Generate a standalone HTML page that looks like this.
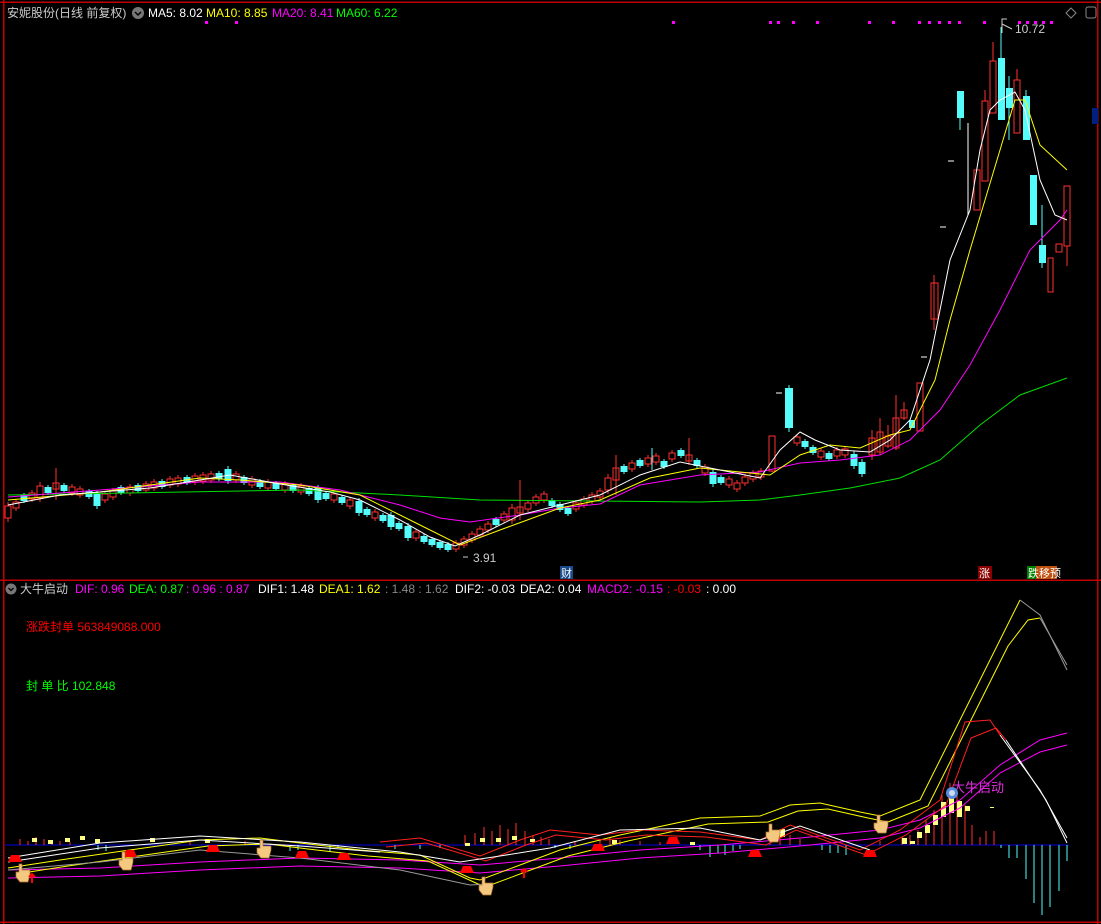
<!DOCTYPE html>
<html><head><meta charset="utf-8"><style>
html,body{margin:0;padding:0;background:#000;width:1101px;height:924px;overflow:hidden}
svg{display:block}
text{font-family:"Liberation Sans","Noto Sans CJK SC",sans-serif}
.c{shape-rendering:crispEdges}
</style></head><body>
<svg width="1101" height="924" viewBox="0 0 1101 924" xmlns="http://www.w3.org/2000/svg" xmlns:xlink="http://www.w3.org/1999/xlink">
<defs>
<g id="u"><line x1="0" y1="-6" x2="0" y2="6" stroke="#ff3030"/><rect x="-3" y="-3" width="6" height="6" fill="#000" stroke="#ff3030"/></g>
<g id="U"><line x1="0" y1="-10" x2="0" y2="10" stroke="#ff3030"/><rect x="-3" y="-6" width="6" height="12" fill="#000" stroke="#ff3030"/></g>
<g id="d"><line x1="0" y1="-5" x2="0" y2="5" stroke="#54fcfc"/><rect x="-3.5" y="-3" width="7" height="6" fill="#54fcfc"/></g>
<g id="D"><line x1="0" y1="-9" x2="0" y2="9" stroke="#54fcfc"/><rect x="-3.5" y="-6" width="7" height="12" fill="#54fcfc"/></g>
</defs>
<rect width="1101" height="924" fill="#000"/>
<g stroke="#c00000" stroke-width="1.5" fill="none" class="c">
<line x1="0" y1="2" x2="1101" y2="2"/>
<line x1="3.5" y1="0" x2="3.5" y2="924"/>
<line x1="1097.5" y1="0" x2="1097.5" y2="924"/>
<line x1="0" y1="580" x2="1101" y2="580"/>
<line x1="0" y1="922" x2="1101" y2="922"/>
</g>
<g class="c">
<use href="#U" x="8" y="512"/><use href="#u" x="16" y="505"/><use href="#d" x="24" y="498"/><use href="#u" x="32" y="496"/><use href="#U" x="40" y="492"/>
<use href="#d" x="48" y="490"/><use href="#u" x="56" y="486"/><use href="#d" x="64" y="488"/><use href="#u" x="72" y="490"/><use href="#u" x="80" y="492"/>
<use href="#d" x="89" y="494"/><use href="#D" x="97" y="500"/><use href="#u" x="105" y="497"/><use href="#u" x="113" y="494"/><use href="#d" x="121" y="490"/>
<use href="#u" x="130" y="490"/><use href="#d" x="138" y="488"/><use href="#u" x="146" y="487"/><use href="#u" x="154" y="485"/><use href="#d" x="162" y="484"/>
<use href="#u" x="170" y="482"/><use href="#u" x="178" y="481"/><use href="#d" x="187" y="480"/><use href="#u" x="195" y="479"/><use href="#u" x="203" y="478"/>
<use href="#u" x="211" y="477"/><use href="#d" x="219" y="476"/><use href="#D" x="228" y="475"/><use href="#u" x="236" y="477"/><use href="#d" x="244" y="480"/>
<use href="#u" x="252" y="482"/><use href="#d" x="260" y="484"/><use href="#u" x="268" y="485"/><use href="#d" x="276" y="486"/><use href="#u" x="285" y="487"/>
<use href="#d" x="293" y="488"/><use href="#u" x="301" y="489"/><use href="#d" x="309" y="491"/><use href="#D" x="318" y="494"/><use href="#d" x="326" y="496"/>
<use href="#u" x="334" y="497"/><use href="#d" x="342" y="500"/><use href="#u" x="350" y="503"/><use href="#D" x="359" y="507"/><use href="#d" x="367" y="512"/>
<use href="#u" x="375" y="515"/><use href="#d" x="383" y="518"/><use href="#D" x="391" y="521"/><use href="#d" x="399" y="526"/><use href="#D" x="408" y="532"/>
<use href="#u" x="416" y="535"/><use href="#d" x="424" y="539"/><use href="#d" x="432" y="542"/><use href="#d" x="440" y="545"/><use href="#d" x="448" y="547"/>
<use href="#u" x="456" y="546"/><use href="#u" x="464" y="542"/><use href="#u" x="472" y="537"/><use href="#u" x="480" y="532"/><use href="#u" x="488" y="527"/>
<use href="#d" x="496" y="522"/><use href="#u" x="504" y="517"/><use href="#U" x="512" y="514"/><use href="#u" x="520" y="510"/><use href="#u" x="528" y="506"/>
<use href="#u" x="536" y="500"/><use href="#u" x="544" y="497"/><use href="#d" x="552" y="503"/><use href="#d" x="560" y="507"/><use href="#d" x="568" y="511"/>
<use href="#u" x="576" y="506"/><use href="#u" x="584" y="502"/><use href="#u" x="592" y="498"/><use href="#u" x="600" y="494"/><use href="#U" x="608" y="484"/>
<use href="#U" x="616" y="474"/><use href="#d" x="624" y="469"/><use href="#u" x="632" y="466"/><use href="#d" x="640" y="463"/><use href="#u" x="648" y="461"/>
<use href="#u" x="656" y="459"/><use href="#d" x="664" y="464"/><use href="#u" x="672" y="456"/><use href="#d" x="681" y="453"/><use href="#u" x="689" y="458"/>
<use href="#d" x="697" y="463"/><use href="#u" x="705" y="470"/><use href="#D" x="713" y="478"/><use href="#d" x="721" y="480"/><use href="#u" x="729" y="482"/>
<use href="#u" x="737" y="486"/><use href="#u" x="745" y="480"/><use href="#u" x="753" y="476"/><use href="#u" x="761" y="474"/>
<line x1="689" y1="438" x2="689" y2="465" stroke="#ff3030"/><line x1="652" y1="448" x2="652" y2="470" stroke="#54fcfc"/><line x1="616" y1="455" x2="616" y2="495" stroke="#ff3030"/>
<line x1="56" y1="468" x2="56" y2="500" stroke="#ff3030"/><line x1="520" y1="480" x2="520" y2="520" stroke="#ff3030"/>
<line x1="772" y1="436" x2="772" y2="472" stroke="#ff3030"/><rect x="769" y="436" width="6" height="35" fill="#000" stroke="#ff3030"/>
<line x1="789" y1="385" x2="789" y2="432" stroke="#54fcfc"/><rect x="785" y="388" width="8" height="40" fill="#54fcfc"/><line x1="776" y1="393" x2="782" y2="393" stroke="#fff"/>
<use href="#u" x="797" y="440"/><use href="#d" x="805" y="444"/><use href="#d" x="813" y="450"/><use href="#u" x="821" y="454"/><use href="#d" x="829" y="456"/>
<use href="#u" x="837" y="453"/><use href="#u" x="845" y="452"/><use href="#D" x="854" y="460"/><use href="#D" x="862" y="468"/>
<rect x="869" y="438" width="6" height="17" fill="#000" stroke="#ff3030"/><line x1="872" y1="430" x2="872" y2="460" stroke="#ff3030"/>
<rect x="877" y="432" width="6" height="20" fill="#000" stroke="#ff3030"/><line x1="880" y1="418" x2="880" y2="455" stroke="#ff3030"/>
<rect x="885" y="436" width="6" height="10" fill="#000" stroke="#ff3030"/><line x1="888" y1="425" x2="888" y2="448" stroke="#ff3030"/>
<rect x="893" y="418" width="6" height="30" fill="#000" stroke="#ff3030"/><line x1="896" y1="395" x2="896" y2="450" stroke="#ff3030"/>
<rect x="901" y="410" width="6" height="8" fill="#000" stroke="#ff3030"/><line x1="904" y1="402" x2="904" y2="420" stroke="#ff3030"/>
<rect x="909" y="420" width="6" height="8" fill="#54fcfc"/>
<rect x="917" y="383" width="6" height="48" fill="#000" stroke="#ff3030"/>
<line x1="921" y1="357" x2="927" y2="357" stroke="#fff"/>
<rect x="931" y="283" width="7" height="36" fill="#000" stroke="#ff3030"/><line x1="934" y1="275" x2="934" y2="330" stroke="#ff3030"/>
<line x1="940" y1="227" x2="946" y2="227" stroke="#fff"/><line x1="948" y1="161" x2="954" y2="161" stroke="#fff"/>
<rect x="957" y="91" width="7" height="27" fill="#54fcfc"/><line x1="960" y1="118" x2="960" y2="130" stroke="#54fcfc"/>
<line x1="968" y1="123" x2="968" y2="215" stroke="#fff"/>
<rect x="974" y="170" width="6" height="40" fill="#000" stroke="#ff3030"/>
<rect x="982" y="101" width="6" height="80" fill="#000" stroke="#ff3030"/><line x1="985" y1="90" x2="985" y2="101" stroke="#ff3030"/>
<rect x="990" y="61" width="6" height="52" fill="#000" stroke="#ff3030"/><line x1="993" y1="42" x2="993" y2="61" stroke="#ff3030"/>
<rect x="998" y="58" width="7" height="62" fill="#54fcfc"/><line x1="1001" y1="27" x2="1001" y2="58" stroke="#54fcfc"/>
<rect x="1006" y="88" width="7" height="20" fill="#54fcfc"/><line x1="1009" y1="76" x2="1009" y2="140" stroke="#54fcfc"/>
<rect x="1014" y="80" width="6" height="53" fill="#000" stroke="#ff3030"/><line x1="1017" y1="69" x2="1017" y2="80" stroke="#ff3030"/>
<rect x="1023" y="96" width="7" height="44" fill="#54fcfc"/><line x1="1026" y1="90" x2="1026" y2="96" stroke="#54fcfc"/>
<rect x="1030" y="175" width="7" height="50" fill="#54fcfc"/>
<rect x="1039" y="245" width="7" height="18" fill="#54fcfc"/><line x1="1042" y1="205" x2="1042" y2="268" stroke="#54fcfc"/>
<rect x="1048" y="258" width="5" height="34" fill="#000" stroke="#ff3030"/>
<rect x="1056" y="244" width="6" height="8" fill="#000" stroke="#ff3030"/>
<rect x="1064" y="186" width="6" height="60" fill="#000" stroke="#ff3030"/><line x1="1067" y1="246" x2="1067" y2="266" stroke="#ff3030"/>
</g>
<g fill="none" stroke-width="1">
<polyline stroke="#00e000" points="8,495 300,490 400,495 480,500 700,502 760,500 800,495 850,488 900,478 940,460 980,425 1020,395 1067,378"/>
<polyline stroke="#ff00ff" points="8,497 100,490 200,482 280,482 340,490 400,505 440,518 470,522 520,515 560,508 600,504 640,485 700,475 760,472 800,463 840,460 880,455 910,440 940,410 970,365 1000,310 1030,250 1060,220 1067,210"/>
<polyline stroke="#ffff00" points="8,500 100,492 200,478 240,480 300,485 360,495 420,525 460,545 500,530 560,508 600,500 650,478 700,468 740,472 770,475 800,455 830,445 860,448 890,435 910,430 935,380 950,320 970,250 985,200 1000,150 1015,100 1025,100 1040,145 1067,170"/>
<polyline stroke="#ffffff" points="8,505 60,495 100,492 150,488 200,480 230,475 280,484 330,492 360,500 400,520 430,537 455,546 480,535 520,515 560,505 600,495 640,475 680,462 720,470 760,478 780,450 800,432 815,440 840,450 870,452 890,440 910,420 930,360 950,260 970,210 980,150 990,110 1000,100 1015,92 1025,110 1040,180 1055,215 1067,220"/>
</g>
<g fill="#f0f" class="c">
<rect x="205" y="21" width="3" height="3"/><rect x="235" y="21" width="3" height="3"/><rect x="672" y="21" width="3" height="3"/><rect x="769" y="21" width="3" height="3"/><rect x="777" y="21" width="3" height="3"/><rect x="792" y="21" width="3" height="3"/><rect x="816" y="21" width="3" height="3"/><rect x="868" y="21" width="3" height="3"/><rect x="892" y="21" width="3" height="3"/><rect x="918" y="21" width="3" height="3"/><rect x="928" y="21" width="3" height="3"/><rect x="938" y="21" width="3" height="3"/><rect x="948" y="21" width="3" height="3"/><rect x="958" y="21" width="3" height="3"/><rect x="983" y="21" width="3" height="3"/><rect x="1018" y="21" width="3" height="3"/><rect x="1026" y="21" width="3" height="3"/><rect x="1034" y="21" width="3" height="3"/><rect x="1042" y="21" width="3" height="3"/><rect x="1050" y="21" width="3" height="3"/>
</g>
<line x1="5" y1="845" x2="1069" y2="845" stroke="#0000e0" class="c"/>
<path class="c" stroke="#ff3030" fill="none" d="M20 845v-6M28 845v-4M36 845v-8M44 845v-6M52 845v-5M60 845v-4M70 845v-3M190 845v-3M245 845v-4M465 845v-10M475 845v-12M484 845v-18M492 845v-14M500 845v-20M508 845v-16M516 845v-22M525 845v-14M533 845v-10M541 845v-8M549 845v-6M575 845v-4M600 845v-5M610 845v-8M620 845v-5M640 845v-4M660 845v-3M770 845v-8M780 845v-16M790 845v-10M800 845v-6M880 845v-4M902 845v-8M910 845v-10M918 845v-15M926 845v-25M934 845v-35M942 845v-50M950 845v-62M957 845v-52M965 845v-40M972 845v-20M980 845v-8M986 845v-14M994 845v-14"/>
<path class="c" stroke="#54fcfc" fill="none" d="M98 845v5M106 845v6M290 845v6M298 845v5M330 845v6M338 845v3M395 845v4M420 845v4M440 845v3M555 845v3M570 845v4M700 845v5M710 845v12M718 845v8M725 845v10M733 845v6M740 845v4M822 845v5M830 845v8M838 845v8M846 845v10M1001 845v3M1009 845v13M1017 845v13M1026 845v34M1034 845v58M1042 845v70M1050 845v62M1059 845v46M1067 845v16"/>
<g fill="#ffff80" class="c">
<rect x="32" y="838" width="5" height="4"/><rect x="48" y="840" width="5" height="4"/><rect x="65" y="838" width="5" height="4"/><rect x="80" y="836" width="5" height="4"/><rect x="95" y="839" width="5" height="4"/><rect x="150" y="838" width="5" height="4"/><rect x="205" y="839" width="5" height="4"/>
<rect x="465" y="843" width="5" height="3"/><rect x="480" y="838" width="5" height="4"/><rect x="496" y="838" width="5" height="4"/><rect x="512" y="836" width="5" height="4"/><rect x="530" y="839" width="5" height="3"/>
<rect x="612" y="840" width="5" height="4"/><rect x="690" y="842" width="5" height="3"/><rect x="771" y="837" width="5" height="4"/><rect x="780" y="829" width="5" height="8"/>
<rect x="902" y="838" width="5" height="6"/><rect x="910" y="841" width="5" height="3"/><rect x="917" y="832" width="5" height="6"/><rect x="925" y="825" width="5" height="8"/><rect x="933" y="815" width="5" height="10"/><rect x="941" y="802" width="5" height="15"/><rect x="949" y="795" width="5" height="18"/><rect x="957" y="801" width="5" height="16"/><rect x="965" y="806" width="5" height="5"/><rect x="990" y="807" width="4" height="1"/>
</g>
<g fill="none" stroke-width="1">
<polyline stroke="#ff00ff" points="8,878 100,876 200,870 300,866 400,868 480,873 560,866 640,858 720,853 800,846 880,838 920,828 960,808 1000,773 1040,752 1067,745"/>
<polyline stroke="#ff00ff" points="8,870 100,868 200,862 300,858 400,860 480,865 560,858 640,850 720,845 800,838 880,830 920,820 960,800 1000,765 1040,740 1067,733"/>
<polyline stroke="#ffff00" points="16,874 68,866 138,856 208,846 268,844 308,849 368,856 428,861 478,884 488,886 528,871 568,856 628,841 708,824 768,822 798,811 828,809 868,818 888,822 928,806 958,746 988,686 1008,646 1028,620 1040,618"/>
<polyline stroke="#ffff00" points="8,868 60,860 130,850 200,840 260,838 300,843 360,850 420,855 470,878 480,880 520,865 560,850 620,835 700,818 760,816 790,805 820,803 860,812 880,816 920,800 950,740 980,680 1000,640 1020,600"/>
<polyline stroke="#999" points="1020,600 1040,615 1067,670"/><polyline stroke="#999" points="1040,618 1067,665"/>
<polyline stroke="#999" points="8,870 100,862 200,850 300,858 400,870 470,885 490,884"/>
<polyline stroke="#ff2020" points="380,842 420,838 480,856 520,840 550,830 600,835 640,830 700,832 760,840 790,825 860,850 900,830 940,800 965,722 990,720 1000,735"/>
<polyline stroke="#ff2020" points="386,847 426,843 486,861 526,845 556,835 606,840 646,835 706,837 766,845 796,830 866,855 906,835 946,805 971,738 996,728 1006,740"/>
<polyline stroke="#fff" points="1000,735 1040,790 1067,838"/><polyline stroke="#fff" points="1006,740 1046,800 1067,843"/>
<polyline stroke="#fff" points="8,858 100,843 200,836 300,842 400,852 460,862 500,856 550,848 620,830 700,828 760,840 800,826 870,850"/>
<polyline stroke="#fff" points="8,862 100,848 200,840 300,846 380,852"/>
</g>
<g fill="#f00">
<path d="M8 862h14l-3-7h-8z"/><path d="M123 857h14l-3-7h-8z"/><path d="M206 852h14l-3-7h-8z"/><path d="M295 858h14l-3-7h-8z"/><path d="M337 860h14l-3-7h-8z"/><path d="M460 873h14l-3-7h-8z"/><path d="M591 851h14l-3-7h-8z"/><path d="M666 844h14l-3-7h-8z"/><path d="M748 857h14l-3-7h-8z"/><path d="M863 857h14l-3-7h-8z"/>
</g>
<g fill="#f5c880" stroke="#b07030" stroke-width="0.7">
<path d="M19 864v8h-3v5l4 5h8l2-8v-4h-8v-6z"/><path d="M122 852v8h-3v5l4 5h8l2-8v-4h-8v-6z"/><path d="M260 840v8h-3v5l4 5h8l2-8v-4h-8v-6z"/><path d="M482 877v8h-3v5l4 5h8l2-8v-4h-8v-6z"/><path d="M769 824v8h-3v5l4 5h8l2-8v-4h-8v-6z"/><path d="M877 815v8h-3v5l4 5h8l2-8v-4h-8v-6z"/>
</g>
<path d="M32 883v-9M29 877l3-3 3 3M524 878v-9M521 872l3-3 3 3" stroke="#f00" stroke-width="2" fill="none"/>
<g font-size="12">
<text x="7" y="17" fill="#ccc">安妮股份(日线 前复权)</text>
<circle cx="138" cy="13" r="6" fill="#777"/><path d="M135 12l3 3 3-3" stroke="#000" stroke-width="1.5" fill="none"/>
<text x="148" y="17" fill="#fff">MA5: 8.02</text>
<text x="206" y="17" fill="#ff0">MA10: 8.85</text>
<text x="272" y="17" fill="#f0f">MA20: 8.41</text>
<text x="336" y="17" fill="#0f0">MA60: 6.22</text>
<circle cx="11" cy="589" r="5.5" fill="#777"/><path d="M8.5 588l2.5 2.5 2.5-2.5" stroke="#000" stroke-width="1.3" fill="none"/>
<text x="20" y="593" fill="#ccc">大牛启动</text>
<text x="75" y="593" fill="#f0f">DIF: 0.96</text>
<text x="129" y="593" fill="#0f0">DEA: 0.87</text>
<text x="186" y="593" fill="#f0f">: 0.96  : 0.87</text>
<text x="258" y="593" fill="#fff">DIF1: 1.48</text>
<text x="319" y="593" fill="#ff0">DEA1: 1.62</text>
<text x="385" y="593" fill="#888">: 1.48  : 1.62</text>
<text x="455" y="593" fill="#fff">DIF2: -0.03</text>
<text x="520" y="593" fill="#fff">DEA2: 0.04</text>
<text x="587" y="593" fill="#f0f">MACD2: -0.15</text>
<text x="667" y="593" fill="#f00">: -0.03</text>
<text x="706" y="593" fill="#fff">: 0.00</text>
<text x="26" y="631" fill="#f00">涨跌封单  563849088.000</text>
<text x="26" y="690" fill="#0f0">封 单 比   102.848</text>
<text x="1015" y="33" fill="#ccc">10.72</text>
<text x="473" y="562" fill="#ccc">3.91</text>
<text x="952" y="792" fill="#e030e0" font-size="13">大牛启动</text>
</g>
<path d="M1002 33v-14h5M1002 24l10 5M463 557h5" stroke="#ccc" fill="none"/>
<path d="M1071 8l5 5-5 5-5-5z" stroke="#888" fill="none"/>
<rect x="1086" y="7" width="10" height="11" rx="2" stroke="#888" fill="none"/>
<rect x="1092" y="108" width="6" height="16" fill="#002080"/>
<rect x="560" y="566" width="13" height="13" fill="#1a4a8a"/><text x="561" y="577" font-size="11" fill="#fff">财</text>
<rect x="978" y="566" width="14" height="13" fill="#8b0000"/><text x="979" y="577" font-size="11" fill="#fff">涨</text>
<rect x="1027" y="566" width="9" height="13" fill="#008000"/><rect x="1036" y="566" width="21" height="13" fill="#c05010"/>
<text x="1028" y="577" font-size="11" fill="#fff">跌移预</text>
<circle cx="952" cy="793" r="6" fill="#5a8ae0"/><circle cx="952" cy="793" r="3" fill="#cde"/>
</svg>
</body></html>
